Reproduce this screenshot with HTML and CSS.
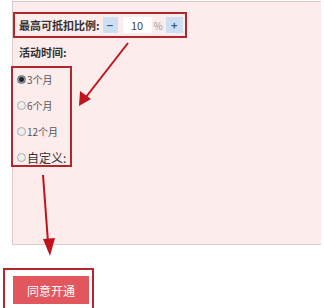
FILE: index.html
```html
<!DOCTYPE html>
<html lang="zh">
<head>
<meta charset="utf-8">
<link rel="stylesheet" href="styles.css">
</head>
<body>
<div class="panel">
  <div class="ratio-box">
    <span class="label">最高可抵扣比例:</span>
    <span class="step">−</span>
    <span class="num">10</span>
    <span class="pct">%</span>
    <span class="step plus">+</span>
  </div>
  <div class="label time">活动时间:</div>
  <div class="radio-box">
    <div class="opt"><span class="radio checked"></span>3个月</div>
    <div class="opt"><span class="radio"></span>6个月</div>
    <div class="opt"><span class="radio"></span>12个月</div>
    <div class="opt custom"><span class="radio"></span>自定义:</div>
  </div>
</div>
<div class="btn-box"><span class="btn">同意开通</span></div>
<svg class="arrows" width="324" height="308" viewBox="0 0 324 308">
  <line x1="128" y1="43" x2="86" y2="97" stroke="#c0141c" stroke-width="2"/>
  <polygon points="79,106 80,91 91,99" fill="#c0141c"/>
  <line x1="43" y1="175" x2="48" y2="242" stroke="#c0141c" stroke-width="2"/>
  <polygon points="50,256 43,239 55,238" fill="#c0141c"/>
</svg>
</body>
</html>
```
FILE: styles.css
```css
html, body {
  margin: 0;
  padding: 0;
}
body {
  width: 324px;
  height: 308px;
  overflow: hidden;
  position: relative;
  background: #fff;
  font-family: "Noto Sans CJK SC", "Noto Sans", sans-serif;
  color: #333;
}
.panel {
  margin: 1px 3px 0 12px;
  height: 244px;
  box-sizing: border-box;
  background: #fcecec;
  border-top: 1px solid #d3c6c6;
  border-left: 1px solid #d8cccc;
  border-bottom: 1px solid #dccdcd;
  padding-top: 10px;
}
.ratio-box {
  display: flex;
  align-items: center;
  width: 174px;
  height: 26px;
  box-sizing: border-box;
  border: 2.5px solid #b3262c;
  padding-left: 4px;
}
.label {
  font-size: 11px;
  font-weight: bold;
  color: #333;
  white-space: nowrap;
  flex-shrink: 0;
  line-height: 14px;
}
.step {
  flex-shrink: 0;
  width: 15px;
  height: 16px;
  margin-left: 3px;
  background: #cfdff2;
  color: #3a5b8c;
  font-size: 11px;
  font-weight: bold;
  display: flex;
  align-items: center;
  justify-content: center;
}
.step.plus {
  width: 17px;
  margin-left: 3px;
}
.num {
  flex-shrink: 0;
  width: 29px;
  height: 16px;
  margin-left: 5px;
  background: #fff;
  font-size: 11px;
  color: #444;
  display: flex;
  align-items: center;
  justify-content: center;
}
.pct {
  flex-shrink: 0;
  font-size: 10px;
  color: #999;
  margin-left: 2px;
}
.time {
  margin: 7px 0 0 6px;
}
.radio-box {
  margin: 7px 0 0 -2px;
  width: 61px;
  height: 101px;
  box-sizing: border-box;
  border: 2.5px solid #b3262c;
  padding-top: 3px;
}
.opt {
  display: flex;
  align-items: center;
  height: 16px;
  margin-bottom: 10px;
  font-size: 10px;
  color: #555;
  padding-left: 4px;
}
.opt.custom {
  margin-top: 2px;
  font-size: 12px;
  color: #333;
}
.radio {
  width: 7px;
  height: 7px;
  border-radius: 50%;
  border: 1px solid #aaa;
  background: #eee;
  margin-right: 1px;
  box-sizing: content-box;
}
.radio.checked {
  background: radial-gradient(circle, #223 0 2px, #8aa 3px);
  border-color: #667;
}
.btn-box {
  margin: 23px 0 0 3px;
  width: 91px;
  height: 44px;
  box-sizing: border-box;
  border: 2.5px solid #b3262c;
  padding: 6px 0 0 8px;
}
.btn {
  display: flex;
  align-items: center;
  justify-content: center;
  width: 76px;
  height: 28px;
  background: #e2575d;
  color: #fff;
  font-size: 12px;
}
.arrows {
  position: absolute;
  left: 0;
  top: 0;
  pointer-events: none;
}
```
